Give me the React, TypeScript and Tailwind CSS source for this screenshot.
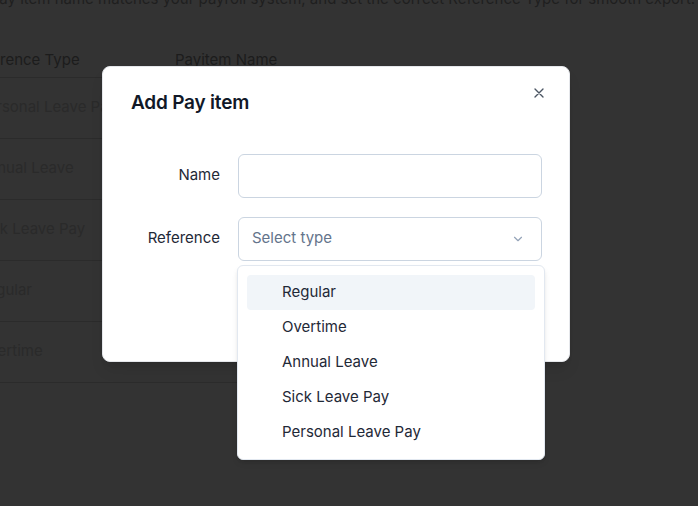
import React from "react";

const rows = ["Personal Leave Pay", "Annual Leave", "Sick Leave Pay", "Regular", "Overtime"];
const options = ["Regular", "Overtime", "Annual Leave", "Sick Leave Pay", "Personal Leave Pay"];

const BackgroundPage: React.FC = () => (
  <div className="absolute inset-0 overflow-hidden bg-[#333333] text-[15px]">
    <div className="-ml-[10px] -mt-[12px] whitespace-nowrap text-[#1f1f1f]">
      pay item name matches your payroll system, and set the correct Reference Type for smooth export.
    </div>
    <div className="-ml-[22px] mt-[34px] w-[420px]">
      <div className="flex h-[32px] items-center text-[#1c1c1c]">
        <div className="-ml-[10px] w-[207px]">Reference Type</div>
        <div>Payitem Name</div>
      </div>
      <div className="border-t border-[#2b2b2b]">
        {rows.map((r) => (
          <div key={r} className="flex h-[61px] items-center gap-[9px] border-b border-[#2b2b2b]">
            <div className="flex h-[52px] w-[185px] items-center rounded-md text-[#2a2a2a]">{r}</div>
            <div className="h-[52px] w-[200px] rounded-md" />
          </div>
        ))}
      </div>
    </div>
  </div>
);

const App: React.FC = () => {
  return (
    <div
      className="relative h-[506px] w-[698px] overflow-hidden"
      style={{ fontFamily: "Inter, 'Noto Sans', sans-serif" }}
    >
      <BackgroundPage />

      {/* modal */}
      <div className="absolute left-[102px] top-[66px] h-[296px] w-[468px] rounded-lg border border-[#e5e7eb] bg-white shadow-lg">
        <div className="flex items-start justify-between pl-[28px] pr-[22px] pt-[22px]">
          <h2 className="text-[19px] font-semibold tracking-[-0.2px] text-[#111827]">Add Pay item</h2>
          <button className="-mt-[4px] text-[#4b5563]">
            <svg width="16" height="16" viewBox="0 0 24 24" fill="none" stroke="currentColor" strokeWidth={2} strokeLinecap="round">
              <path d="M18 6 6 18M6 6l12 12" />
            </svg>
          </button>
        </div>

        <div className="mt-[36px] flex flex-col gap-[19px] pl-[28px] pr-[27px]">
          <div className="flex items-center gap-[18px]">
            <label className="w-[89px] text-right text-[15px] text-[#1f2937]">Name</label>
            <input className="h-[44px] flex-1 rounded-md border border-[#cbd5e1] px-3 outline-none" />
          </div>
          <div className="flex items-center gap-[18px]">
            <label className="w-[89px] text-right text-[15px] text-[#1f2937]">Reference</label>
            <div className="flex h-[44px] flex-1 items-center justify-between rounded-md border border-[#cbd5e1] pl-[13px] pr-[16px]">
              <span className="text-[15px] text-[#64748b]">Select type</span>
              <svg width="14" height="14" viewBox="0 0 24 24" fill="none" stroke="#94a3b8" strokeWidth={2} strokeLinecap="round" strokeLinejoin="round">
                <path d="m6 9 6 6 6-6" />
              </svg>
            </div>
          </div>
        </div>
      </div>

      {/* dropdown menu */}
      <div className="absolute left-[237px] top-[265px] w-[308px] rounded-md border border-[#e2e8f0] bg-white p-[9px] shadow-md">
        {options.map((o, i) => (
          <div
            key={o}
            className={
              "flex h-[35px] items-center rounded pl-[35px] text-[15px] text-[#1f2937] " +
              (i === 0 ? "bg-[#f1f5f9]" : "")
            }
          >
            {o}
          </div>
        ))}
      </div>
    </div>
  );
};

export default App;
